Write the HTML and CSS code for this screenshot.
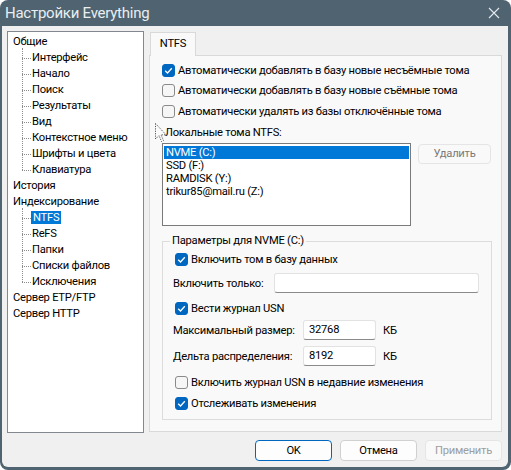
FILE: index.html
```html
<!DOCTYPE html>
<html lang="ru">
<head>
<meta charset="utf-8">
<title>Настройки Everything</title>
<link rel="stylesheet" href="styles.css">
</head>
<body>
<div class="window">
  <div class="titlebar">
    <span class="title">Настройки Everything</span>
    <svg class="close" width="12" height="12" viewBox="0 0 12 12"><path d="M1 1 L11 11 M11 1 L1 11" stroke="#e4eaee" stroke-width="1.1" fill="none"/></svg>
  </div>
  <div class="client">
    <div class="tree">
      <div class="node">Общие</div>
      <div class="children">
        <div class="node child">Интерфейс</div>
        <div class="node child">Начало</div>
        <div class="node child">Поиск</div>
        <div class="node child">Результаты</div>
        <div class="node child">Вид</div>
        <div class="node child">Контекстное меню</div>
        <div class="node child">Шрифты и цвета</div>
        <div class="node child">Клавиатура</div>
      </div>
      <div class="node">История</div>
      <div class="node">Индексирование</div>
      <div class="children">
        <div class="node child"><span class="sel">NTFS</span></div>
        <div class="node child">ReFS</div>
        <div class="node child">Папки</div>
        <div class="node child">Списки файлов</div>
        <div class="node child">Исключения</div>
      </div>
      <div class="node">Сервер ETP/FTP</div>
      <div class="node">Сервер HTTP</div>
    </div>

    <div class="right">
      <div class="tabs"><div class="tab">NTFS</div></div>
      <div class="page">
        <div class="cbrow"><span class="cb on"><svg viewBox="0 0 13 13"><path d="M3.2 6.8 L5.5 9 L9.8 4.2" stroke="#fff" stroke-width="1.3" fill="none"/></svg></span>Автоматически добавлять в базу новые несъёмные тома</div>
        <div class="cbrow"><span class="cb"></span>Автоматически добавлять в базу новые съёмные тома</div>
        <div class="cbrow"><span class="cb"></span>Автоматически удалять из базы отключённые тома</div>
        <div class="label">Локальные тома NTFS:</div>
        <div class="listrow">
          <div class="listbox">
            <div class="item selected">NVME (C:)</div>
            <div class="item">SSD (F:)</div>
            <div class="item">RAMDISK (Y:)</div>
            <div class="item">trikur85@mail.ru (Z:)</div>
          </div>
          <div class="btn small disabled">Удалить</div>
        </div>
        <fieldset class="group">
          <legend>Параметры для NVME (C:)</legend>
          <div class="cbrow g r1"><span class="cb on"><svg viewBox="0 0 13 13"><path d="M3.2 6.8 L5.5 9 L9.8 4.2" stroke="#fff" stroke-width="1.3" fill="none"/></svg></span>Включить том в базу данных</div>
          <div class="fieldrow r2"><span class="flabel">Включить только:</span><span class="input wide"></span></div>
          <div class="cbrow g r3"><span class="cb on"><svg viewBox="0 0 13 13"><path d="M3.2 6.8 L5.5 9 L9.8 4.2" stroke="#fff" stroke-width="1.3" fill="none"/></svg></span>Вести журнал USN</div>
          <div class="fieldrow r4"><span class="flabel num">Максимальный размер:</span><span class="input short">32768</span><span class="unit">КБ</span></div>
          <div class="fieldrow r5"><span class="flabel num">Дельта распределения:</span><span class="input short">8192</span><span class="unit">КБ</span></div>
          <div class="cbrow g r6"><span class="cb"></span>Включить журнал USN в недавние изменения</div>
          <div class="cbrow g r7"><span class="cb on"><svg viewBox="0 0 13 13"><path d="M3.2 6.8 L5.5 9 L9.8 4.2" stroke="#fff" stroke-width="1.3" fill="none"/></svg></span>Отслеживать изменения</div>
        </fieldset>
        <svg class="cursor" width="13" height="20" viewBox="0 0 13 20"><path d="M0.5 0.5 L0.5 16 L4 12.5 L6.5 18.5 L8.5 17.5 L6 11.8 L11 11.8 Z" fill="rgba(255,255,255,0.35)" stroke="#555" stroke-width="1" stroke-dasharray="1.2 1.2"/></svg>
      </div>
    </div>

    <div class="buttons">
      <div class="btn default">OK</div>
      <div class="btn">Отмена</div>
      <div class="btn disabled">Применить</div>
    </div>
  </div>
</div>
</body>
</html>
```

FILE: styles.css
```css
* { box-sizing: border-box; }
html, body { margin: 0; padding: 0; }
body {
  width: 511px;
  height: 470px;
  background: #ffffff;
  font-family: Roboto, "Noto Sans", sans-serif;
  font-size: 11.2px;
  letter-spacing: -0.25px;
  color: #000;
  overflow: hidden;
}
.window {
  width: 511px;
  height: 470px;
  background: #4f6370;
  border-radius: 8px;
  display: flex;
  flex-direction: column;
}
.titlebar {
  height: 26px;
  flex: none;
  display: flex;
  align-items: center;
  justify-content: space-between;
  padding: 0 11px 0 5px;
}
.title {
  color: #e8eef1;
  font-size: 15px;
  letter-spacing: -0.25px;
}
.close { display: block; }

.client {
  flex: 1;
  margin: 0 3px 3px 2px;
  background: #f0f0f0;
  border-radius: 0 0 6px 6px;
  display: grid;
  grid-template-columns: 137px 1fr;
  grid-template-rows: 402px 21px;
  column-gap: 5px;
  row-gap: 7px;
  padding: 5px 6px 6px 5px;
}

/* tree */
.tree {
  background: #fff;
  border: 1px solid #828790;
  padding: 2px 0 0 5px;
}
.node {
  height: 16px;
  line-height: 16px;
  white-space: nowrap;
}
.children { position: relative; }
.child {
  position: relative;
  padding-left: 19px;
}
.child::before {
  content: "";
  position: absolute;
  left: 9px;
  top: -8px;
  height: 16px;
  border-left: 1px dotted #8c8c8c;
}
.child:first-child::before { top: -2px; height: 10px; }
.child::after {
  content: "";
  position: absolute;
  left: 9px;
  top: 8px;
  width: 9px;
  border-top: 1px dotted #8c8c8c;
}
.sel {
  display: inline-block;
  background: #0078d7;
  color: #fff;
  line-height: 13px;
  padding: 0 2px;
  margin-left: -1px;
}

/* right */
.right {
  display: flex;
  flex-direction: column;
  padding-top: 1px;
  padding-bottom: 1px;
}
.tabs {
  height: 23px;
  flex: none;
  display: flex;
  position: relative;
  z-index: 1;
}
.tab {
  margin-left: 1px;
  width: 46px;
  height: 24px;
  background: #f9f9f9;
  border: 1px solid #d9d9d9;
  border-bottom: none;
  text-align: center;
  line-height: 22px;
}
.page {
  flex: 1;
  position: relative;
  background: #f9f9f9;
  border: 1px solid #d9d9d9;
  padding: 4px 8px 0 12px;
}
.cbrow {
  height: 20.5px;
  display: flex;
  align-items: center;
  white-space: nowrap;
}
.cb {
  width: 13px;
  height: 13px;
  flex: none;
  border-radius: 3px;
  border: 1px solid #8a8a8a;
  background: #f6f6f6;
  margin-right: 3px;
  display: flex;
}
.cb.on {
  background: #0067c0;
  border-color: #0067c0;
}
.cb svg { width: 13px; height: 13px; margin: -1px; }

.label {
  height: 16px;
  line-height: 16px;
  margin: 3px 0 0 3px;
}
.listrow {
  display: flex;
  align-items: flex-start;
  margin-top: 2.5px;
  gap: 7px;
}
.listbox {
  width: 249px;
  height: 83px;
  background: #fff;
  border: 1px solid #7a7a7a;
  padding: 1.5px 1px;
}
.item {
  height: 13.3px;
  line-height: 13.3px;
  padding-left: 2px;
  white-space: nowrap;
}
.item.selected {
  background: #0078d7;
  color: #fff;
}
.btn {
  height: 21px;
  width: 77px;
  background: #fdfdfd;
  border: 1px solid #d0d0d0;
  border-radius: 4px;
  text-align: center;
  line-height: 19px;
}
.btn.small {
  width: 73px;
  height: 20px;
  margin-top: 1px;
  line-height: 18px;
}
.btn.disabled {
  background: #f9f9f9;
  border-color: #e5e5e5;
  color: #9d9d9d;
}
.btn.small.disabled { color: #7a7a7a; }
.btn.default {
  border-color: #0067c0;
}

.group {
  margin: 7px 0 0 0;
  width: 330px;
  height: 187px;
  border: 1px solid #dcdcdc;
  padding: 0 12px 0 12px;
}
.group legend {
  padding: 0 2px;
  margin-left: -5px;
  line-height: 16px;
  height: 16px;
}
.cbrow.g { height: 16px; }
.r1 { margin-top: 2px; }
.r2 { margin-top: 6px; }
.r3 { margin-top: 7px; }
.r4 { margin-top: 4px; }
.r5 { margin-top: 6px; }
.r6 { margin-top: 8px; }
.r7 { margin-top: 5px; }
.fieldrow {
  height: 20px;
  display: flex;
  align-items: center;
  white-space: nowrap;
}
.flabel { margin-left: -2px; }
.flabel.num { width: 130px; flex: none; }
.r2 .flabel { width: 101px; flex: none; }
.input {
  height: 20px;
  background: #fff;
  border: 1px solid #e2e2e2;
  border-bottom-color: #8a8a8a;
  border-radius: 3px;
  padding: 0 5px;
  line-height: 18px;
}
.input.wide { width: 205px; }
.input.short { width: 73px; }
.unit { margin-left: 7px; }

.cursor {
  position: absolute;
  left: 5px;
  top: 67px;
}

.buttons {
  grid-column: 1 / 3;
  display: flex;
  justify-content: flex-end;
  gap: 8px;
}
```
